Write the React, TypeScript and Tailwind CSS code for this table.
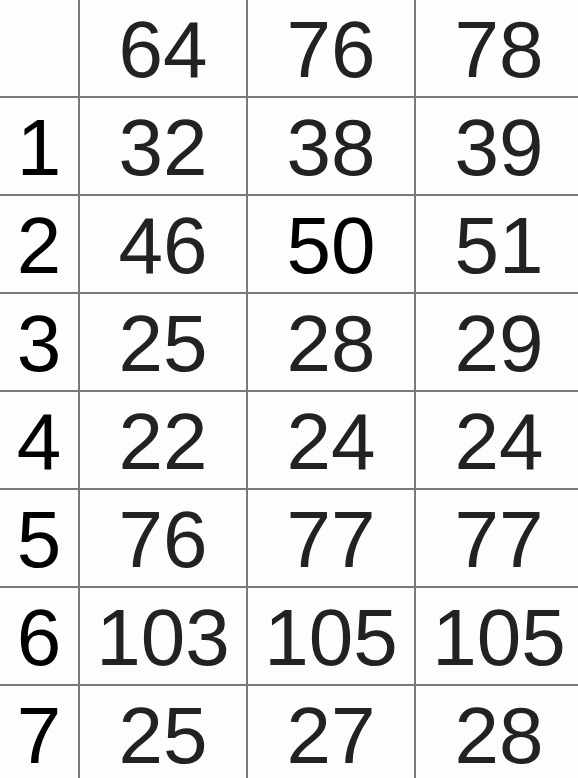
const header = ['64', '76', '78'];

const rows: { label: string; values: string[] }[] = [
  { label: '1', values: ['32', '38', '39'] },
  { label: '2', values: ['46', '50', '51'] },
  { label: '3', values: ['25', '28', '29'] },
  { label: '4', values: ['22', '24', '24'] },
  { label: '5', values: ['76', '77', '77'] },
  { label: '6', values: ['103', '105', '105'] },
  { label: '7', values: ['25', '27', '28'] },
];

function Cell({ children, dark }: { children?: React.ReactNode; dark?: boolean }) {
  return (
    <div
      className={`h-[98px] border-r-2 border-b-2 border-[#787878] pt-[5px] text-center text-[80px] leading-[89px] ${
        dark ? 'text-black' : 'text-[#222222]'
      }`}
    >
      {children}
    </div>
  );
}

export default function App() {
  return (
    <div
      className="w-[578px] h-[778px] overflow-hidden bg-[#fdfdfd]"
      style={{ fontFamily: '"Liberation Sans", Arial, sans-serif' }}
    >
      <div className="grid w-[584px] grid-cols-[80px_168px_168px_168px]">
        <Cell />
        {header.map((h, i) => (
          <Cell key={i}>{h}</Cell>
        ))}
        {rows.map((r) => (
          <>
            <Cell key={r.label} dark>
              {r.label}
            </Cell>
            {r.values.map((v, j) => (
              <Cell key={r.label + '-' + j} dark={r.label === '2' && j === 1}>
                {v}
              </Cell>
            ))}
          </>
        ))}
      </div>
    </div>
  );
}
